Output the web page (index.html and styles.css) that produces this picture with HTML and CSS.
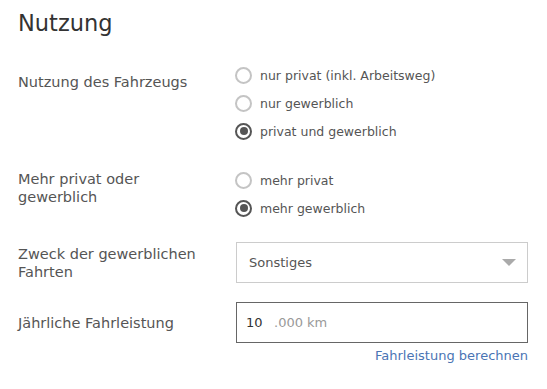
FILE: index.html
```html
<!DOCTYPE html>
<html lang="de">
<head>
<meta charset="utf-8">
<link rel="stylesheet" href="styles.css">
</head>
<body>
<div class="page">
  <h1 class="title">Nutzung</h1>

  <div class="row row-first">
    <div class="label">Nutzung des Fahrzeugs</div>
    <div class="field">
      <div class="radio"><span class="circle"></span><span class="rtext">nur privat (inkl. Arbeitsweg)</span></div>
      <div class="radio"><span class="circle"></span><span class="rtext">nur gewerblich</span></div>
      <div class="radio"><span class="circle checked"></span><span class="rtext">privat und gewerblich</span></div>
    </div>
  </div>

  <div class="row row-second">
    <div class="label">Mehr privat oder<br>gewerblich</div>
    <div class="field">
      <div class="radio"><span class="circle"></span><span class="rtext">mehr privat</span></div>
      <div class="radio"><span class="circle checked"></span><span class="rtext">mehr gewerblich</span></div>
    </div>
  </div>

  <div class="row row-third">
    <div class="label label-select">Zweck der gewerblichen<br>Fahrten</div>
    <div class="field">
      <div class="select"><span>Sonstiges</span><span class="arrow"></span></div>
    </div>
  </div>

  <div class="row row-fourth">
    <div class="label label-input">Jährliche Fahrleistung</div>
    <div class="field">
      <div class="input"><span class="num">10</span><span class="unit">.000 km</span></div>
      <div class="link-line"><a class="link" href="#">Fahrleistung berechnen</a></div>
    </div>
  </div>
</div>
</body>
</html>
```

FILE: styles.css
```css
html, body {
  margin: 0;
  padding: 0;
  background: #fff;
}
body {
  font-family: "DejaVu Sans", Verdana, sans-serif;
  color: #555;
}
.page {
  padding: 9px 19px 0 18px;
}
.title {
  margin: 0;
  font-size: 22.5px;
  font-weight: normal;
  color: #333;
  line-height: 28px;
}
.row {
  display: flex;
}
.row-first {
  margin-top: 24px;
}
.row-second {
  margin-top: 21px;
}
.row-third {
  margin-top: 20px;
}
.row-fourth {
  margin-top: 19px;
}
.label {
  width: 218px;
  font-size: 14.5px;
  line-height: 18px;
  color: #555;
}
.row-first .label {
  padding-top: 12px;
}
.row-second .label {
  padding-top: 4px;
}
.label-select {
  padding-top: 3px;
}
.label-input {
  padding-top: 12px;
}
.field {
  flex: 1;
}
.radio {
  display: flex;
  align-items: center;
  height: 28px;
  font-size: 12.5px;
  color: #555;
}
.circle {
  box-sizing: border-box;
  width: 17px;
  height: 17px;
  border: 2px solid #c4c4c4;
  border-radius: 50%;
  margin-left: -1px;
  margin-right: 8px;
  display: flex;
  align-items: center;
  justify-content: center;
}
.circle.checked {
  border-color: #555;
}
.circle.checked::after {
  content: "";
  width: 8px;
  height: 8px;
  border-radius: 50%;
  background: #555;
}
.select {
  box-sizing: border-box;
  height: 41px;
  border: 1px solid #ccc;
  display: flex;
  align-items: center;
  justify-content: space-between;
  padding: 0 11px 0 12px;
  font-size: 13px;
  color: #555;
}
.arrow {
  width: 0;
  height: 0;
  border-left: 7px solid transparent;
  border-right: 7px solid transparent;
  border-top: 7px solid #aaa;
}
.input {
  box-sizing: border-box;
  height: 41px;
  border: 1px solid #666;
  display: flex;
  align-items: center;
  padding-left: 9px;
  font-size: 13px;
}
.num {
  color: #333;
  width: 28px;
}
.unit {
  color: #999;
}
.link-line {
  text-align: right;
  margin-top: 4px;
  font-size: 13px;
  line-height: 18px;
}
.link {
  color: #4a74b4;
  text-decoration: none;
}
```
